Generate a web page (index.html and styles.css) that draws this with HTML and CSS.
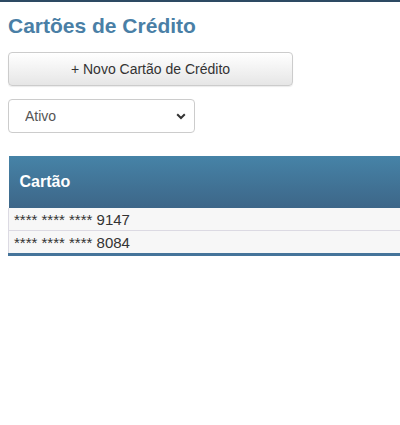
FILE: index.html
```html
<!DOCTYPE html>
<html lang="pt">
<head>
    <meta charset="UTF-8">
    <meta name="viewport" content="width=device-width, initial-scale=1.0">
    <title>Cartões de Crédito</title>
    <link rel="stylesheet" href="styles.css">
</head>
<body>
    <main class="page">
        <h2 class="title">Cartões de Crédito</h2>
        <div class="btnContainer">
            <button type="button" class="btn">+ Novo Cartão de Crédito</button>
        </div>
        <div class="filterBlock">
            <div class="selectWrap">
                <select class="select" name="status">
                    <option value="A">Ativo</option>
                    <option value="I">Inativo</option>
                </select>
                <svg class="chevron" width="10" height="7" viewBox="0 0 10 7">
                    <path d="M1.2 1.3 L5 5 L8.8 1.3" fill="none" stroke="#333" stroke-width="2"/>
                </svg>
            </div>
        </div>
        <div class="tableWrap">
            <table class="grid">
                <thead>
                    <tr><th>Cartão</th></tr>
                </thead>
                <tbody>
                    <tr><td>**** **** **** 9147</td></tr>
                    <tr><td>**** **** **** 8084</td></tr>
                </tbody>
            </table>
        </div>
    </main>
</body>
</html>
```

FILE: styles.css
```css
  body, html {
   margin: 0;
   padding: 0;
   background-color: #fff;
   font-family: "Liberation Sans", Arial, sans-serif;
   color: #333;
  }

  body {
   border-top: 2px solid #2d4a63;
  }

  .page {
   padding: 0 0 0 8px;
  }

  .title {
   font-size: 21px;
   font-weight: 700;
   color: #4a7fa6;
   margin: 12px 0 14px;
   line-height: 24px;
  }

  .btnContainer {
   margin-bottom: 13px;

   .btn {
    width: 285px;
    height: 34px;
    border: 1px solid #ccc;
    border-radius: 4px;
    background: linear-gradient(#fff, #e6e6e6);
    box-shadow: 0 1px 1px rgba(0, 0, 0, 0.08);
    font-family: inherit;
    font-size: 14px;
    color: #333;
    cursor: pointer;
   }
  }

  .filterBlock {
   margin-bottom: 23px;

   .selectWrap {
    position: relative;
    width: 187px;
   }

   .select {
    appearance: none;
    width: 187px;
    height: 34px;
    border: 1px solid #ccc;
    border-radius: 4px;
    background: #fff;
    padding: 0 0 0 16px;
    font-family: inherit;
    font-size: 14px;
    color: #555;
    outline: none;
   }

   .chevron {
    position: absolute;
    right: 9px;
    top: 14px;
    pointer-events: none;
   }
  }

  .tableWrap {
   width: 100%;
  }

  .grid {
   width: 100%;
   border-collapse: collapse;
   border-bottom: 3px solid #45749a;

   th {
    height: 52px;
    padding: 0 11px;
    text-align: left;
    font-size: 16px;
    font-weight: 700;
    color: #fff;
    background: linear-gradient(#4683a7, #3d6688);
   }

   td {
    height: 22px;
    padding: 0 5px;
    font-size: 15px;
    color: #333;
    background: #f7f7f7;
    border-left: 1px solid #dcdae3;
    border-bottom: 1px solid #dcdae3;
   }

   tbody tr:last-child td {
    border-bottom: none;
   }
  }
```
